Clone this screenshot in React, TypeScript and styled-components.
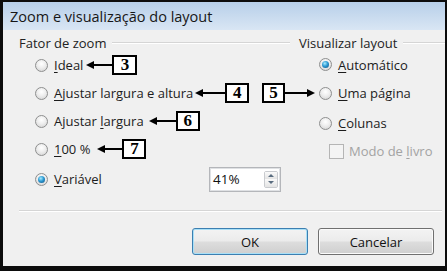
import React, { FC } from "react";
import styled, { createGlobalStyle, css } from "styled-components";

const GlobalStyle = createGlobalStyle`
  html, body {
    margin: 0;
    padding: 0;
    background: #ffffff;
  }
  body {
    font-family: "Open Sans", "Noto Sans", sans-serif;
  }
`;

const Arrow: FC<{ width: number; right?: boolean }> = ({ width, right }) => (
  <svg width={width} height={10} viewBox={`0 0 ${width} 10`}>
    {right ? (
      <>
        <line x1={0} y1={5} x2={width - 6} y2={5} stroke="#000" strokeWidth={2} />
        <polygon points={`${width},5 ${width - 8},1 ${width - 8},9`} fill="#000" />
      </>
    ) : (
      <>
        <line x1={6} y1={5} x2={width} y2={5} stroke="#000" strokeWidth={2} />
        <polygon points="0,5 8,1 8,9" fill="#000" />
      </>
    )}
  </svg>
);

const Callout: FC<{ n: number; arrow: number; gap?: number; boxWidth?: number }> = ({
  n,
  arrow,
  gap = 4,
  boxWidth = 24,
}) => (
  <CalloutWrap style={{ marginLeft: gap }}>
    <Arrow width={arrow} />
    <NumBox $w={boxWidth}>{n}</NumBox>
  </CalloutWrap>
);

const App: FC = () => {
  return (
    <>
      <GlobalStyle />
      <Dialog>
        <TitleBar>Zoom e visualização do layout</TitleBar>
        <Body>
          <Columns>
            <LeftGroup>
              <GroupHeader>Fator de zoom</GroupHeader>
              <Row $indent={16}>
                <Radio />
                <Label>
                  <Key>I</Key>deal
                </Label>
                <Callout n={3} arrow={26} gap={3} boxWidth={25} />
              </Row>
              <Row $indent={16}>
                <Radio />
                <Label>
                  <Key>A</Key>justar largura e altura
                </Label>
                <Callout n={4} arrow={30} gap={2} />
              </Row>
              <Row $indent={16}>
                <Radio />
                <Label>
                  Ajustar <Key>l</Key>argura
                </Label>
                <Callout n={6} arrow={27} gap={5} />
              </Row>
              <Row $indent={16}>
                <Radio />
                <Label>
                  <Key>1</Key>00 %
                </Label>
                <Callout n={7} arrow={25} gap={7} />
              </Row>
              <Row $indent={16} $height={32}>
                <Radio $checked />
                <Label>
                  <Key>V</Key>ariável
                </Label>
                <SpinBox>
                  <SpinValue>41%</SpinValue>
                  <SpinButtons>
                    <SpinButton $up />
                    <SpinButton />
                  </SpinButtons>
                </SpinBox>
              </Row>
            </LeftGroup>
            <RightGroup>
              <GroupHeader>Visualizar layout</GroupHeader>
              <Row $indent={20} $height={27}>
                <Radio $checked />
                <Label>
                  <Key>A</Key>utomático
                </Label>
              </Row>
              <Row $indent={20} $height={30}>
                <Anchor>
                  <LeftCallout>
                    <NumBox $w={23}>5</NumBox>
                    <Arrow width={30} right />
                  </LeftCallout>
                  <Radio />
                </Anchor>
                <Label>
                  <Key>U</Key>ma página
                </Label>
              </Row>
              <Row $indent={20} $height={30}>
                <Radio />
                <Label>
                  <Key>C</Key>olunas
                </Label>
              </Row>
              <Row $indent={30} $height={26}>
                <CheckBox />
                <Label $disabled>
                  Modo de <Key>l</Key>ivro
                </Label>
              </Row>
            </RightGroup>
          </Columns>
          <Separator />
          <Footer>
            <Button $default>OK</Button>
            <Button>Cancelar</Button>
          </Footer>
        </Body>
      </Dialog>
    </>
  );
};

export default App;

const Dialog = styled.div`
  width: 447px;
  height: 271px;
  box-sizing: border-box;
  border-style: solid;
  border-color: #0c0c0c;
  border-width: 2px 2px 5px 3px;
  background: #f0f0f0;
  display: flex;
  flex-direction: column;
  color: #1c1c1c;
  font-size: 13px;
`;

const TitleBar = styled.div`
  flex: none;
  height: 28px;
  display: flex;
  align-items: center;
  padding-left: 7px;
  background: linear-gradient(#b7cfe9, #d9e6f4);
  font-size: 14.5px;
  color: #161616;
`;

const Body = styled.div`
  flex: 1;
  display: flex;
  flex-direction: column;
  padding: 4px 0 0 16px;
`;

const Columns = styled.div`
  display: flex;
  gap: 9px;
  height: 172px;
`;

const LeftGroup = styled.div`
  width: 271px;
  display: flex;
  flex-direction: column;
`;

const RightGroup = styled.div`
  flex: 1;
  display: flex;
  flex-direction: column;
`;

const GroupHeader = styled.div`
  height: 17px;
  display: flex;
  align-items: center;
  gap: 6px;
  color: #222;

  &::after {
    content: "";
    flex: 1;
    height: 1px;
    background: #d5d5d5;
    border-bottom: 1px solid #ffffff;
  }
`;

const Row = styled.div<{ $indent: number; $height?: number }>`
  display: flex;
  align-items: center;
  height: ${(p) => p.$height ?? 28}px;
  padding-left: ${(p) => p.$indent}px;
  white-space: nowrap;
`;

const Radio = styled.span<{ $checked?: boolean }>`
  position: relative;
  flex: none;
  width: 11px;
  height: 11px;
  border-radius: 50%;
  border: 1px solid #8e8f8f;
  background: radial-gradient(circle at 50% 35%, #ffffff 0%, #eeeeee 45%, #cfcfcf 100%);
  margin-right: 6px;

  ${(p) =>
    p.$checked &&
    css`
      &::after {
        content: "";
        position: absolute;
        left: 2px;
        top: 2px;
        width: 7px;
        height: 7px;
        border-radius: 50%;
        background: radial-gradient(circle at 40% 35%, #a8ecff 0%, #2d9ad3 45%, #0d4c7c 100%);
      }
    `}
`;

const Anchor = styled.span`
  position: relative;
  display: flex;
`;

const LeftCallout = styled.span`
  position: absolute;
  right: calc(100% + 4px);
  top: 50%;
  transform: translateY(-50%);
  display: flex;
  align-items: center;
`;

const CheckBox = styled.span`
  flex: none;
  width: 13px;
  height: 13px;
  border: 1px solid #b5b5b5;
  background: #f4f4f4;
  margin-right: 5px;
`;

const Label = styled.span<{ $disabled?: boolean }>`
  color: ${(p) => (p.$disabled ? "#a3a3a3" : "#1c1c1c")};
`;

const Key = styled.span`
  text-decoration: underline;
  text-underline-offset: 2px;
`;

const CalloutWrap = styled.span`
  display: flex;
  align-items: center;
`;

const NumBox = styled.span<{ $w: number }>`
  width: ${(p) => p.$w}px;
  height: 20px;
  box-sizing: border-box;
  border: 2px solid #000;
  background: #ffffff;
  display: flex;
  align-items: center;
  justify-content: center;
  font-family: "Liberation Serif", serif;
  font-weight: bold;
  font-size: 17px;
  color: #000;
`;

const SpinBox = styled.div`
  margin-left: auto;
  margin-right: 9px;
  width: 72px;
  height: 25px;
  box-sizing: border-box;
  border: 1px solid #b4b6ba;
  box-shadow: inset 0 0 0 1px #dfe1e4;
  background: #ffffff;
  display: flex;
  align-items: stretch;
  padding: 3px 2px 3px 3px;
`;

const SpinValue = styled.span`
  flex: 1;
  display: flex;
  align-items: center;
  font-size: 13.5px;
  color: #111;
`;

const SpinButtons = styled.span`
  width: 12px;
  display: flex;
  flex-direction: column;
  border: 1px solid #c9cbcf;
  border-radius: 2px;
`;

const SpinButton = styled.span<{ $up?: boolean }>`
  flex: 1;
  display: flex;
  align-items: center;
  justify-content: center;
  background: linear-gradient(#fafafa, #e4e4e4);

  &::after {
    content: "";
    border-left: 3px solid transparent;
    border-right: 3px solid transparent;
    ${(p) =>
      p.$up
        ? css`
            border-bottom: 3px solid #5a6d80;
          `
        : css`
            border-top: 3px solid #5a6d80;
          `}
  }
`;

const Separator = styled.div`
  height: 1px;
  margin: 4px 3px 0 0;
  background: #d5d5d5;
  border-bottom: 1px solid #ffffff;
`;

const Footer = styled.div`
  display: flex;
  justify-content: flex-end;
  gap: 10px;
  margin-top: 16px;
  padding-right: 11px;
`;

const Button = styled.div<{ $default?: boolean }>`
  width: 116px;
  height: 27px;
  box-sizing: border-box;
  border-radius: 3px;
  border: 1px solid ${(p) => (p.$default ? "#3c7fb1" : "#707070")};
  box-shadow: inset 0 0 0 1px ${(p) => (p.$default ? "#a9e0f7" : "#fbfbfb")};
  background: linear-gradient(#f3f3f3 0%, #ebebeb 48%, #dddddd 52%, #cfcfcf 100%);
  display: flex;
  align-items: center;
  justify-content: center;
  font-size: 13px;
  color: #111;
`;
